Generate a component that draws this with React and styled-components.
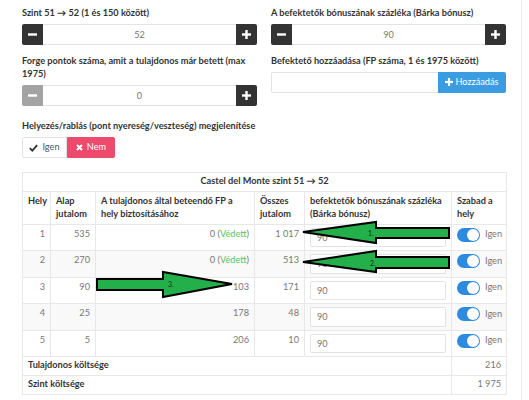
import React from 'react';
import styled, { createGlobalStyle } from 'styled-components';

const Global = createGlobalStyle`
  html, body { margin: 0; padding: 0; background: #fff; }
  body {
    font-family: Lato, "Open Sans", sans-serif;
    font-size: 9.2px;
    line-height: 12.8px;
    color: #333;
  }
  * { box-sizing: border-box; }
`;

const Page = styled.div`
  width: 522px;
  min-height: 400px;
  border-right: 1px solid #ececec;
  padding: 7px 16px 0 22px;
`;

const FormGrid = styled.div`
  display: grid;
  grid-template-columns: 235px 235px;
  column-gap: 14px;
`;

const Column = styled.div`
  display: flex;
  flex-direction: column;
`;

const Group = styled.div`
  margin-bottom: 10px;
  margin-top: ${p => (p.$spaced ? '4px' : '0')};
`;

const Label = styled.div`
  font-weight: 700;
  color: #333;
  white-space: ${p => (p.$nowrap ? 'nowrap' : 'normal')};
  margin-bottom: ${p => (p.$tall ? '5px' : '4px')};
`;

const InputGroup = styled.div`
  display: flex;
  height: 21px;
`;

const StepButton = styled.button`
  width: 21px;
  height: 21px;
  border: none;
  padding: 0;
  display: flex;
  align-items: center;
  justify-content: center;
  background: ${p => (p.$disabled ? '#a3a3a3' : '#333')};
  border-radius: ${p => (p.$side === 'left' ? '2px 0 0 2px' : '0 2px 2px 0')};
`;

const NumberInput = styled.input`
  flex: 1;
  min-width: 0;
  height: 21px;
  border: 1px solid #e3e3e3;
  border-left: none;
  border-right: none;
  text-align: center;
  font: inherit;
  color: #777;
  padding: 0;
  outline: none;
`;

const TextInput = styled.input`
  flex: 1;
  min-width: 0;
  height: 21px;
  border: 1px solid #e3e3e3;
  border-right: none;
  border-radius: 2px 0 0 2px;
  font: inherit;
  padding: 0 6px;
  outline: none;
`;

const AddButton = styled.button`
  width: 68px;
  height: 21px;
  border: none;
  border-radius: 0 2px 2px 0;
  background: #3a9de2;
  color: #fff;
  font: inherit;
  display: flex;
  align-items: center;
  justify-content: center;
  gap: 2px;
  padding: 0;
`;

const ToggleRow = styled.div`
  display: flex;
  height: 21px;
`;

const ToggleButton = styled.button`
  width: ${p => p.$w}px;
  height: 21px;
  font: inherit;
  display: flex;
  align-items: center;
  justify-content: center;
  gap: 4px;
  padding: 0;
  border: 1px solid ${p => (p.$active ? '#ee4a6d' : '#e3e3e3')};
  background: ${p => (p.$active ? '#ee4a6d' : '#fff')};
  color: ${p => (p.$active ? '#fff' : '#555')};
  border-radius: ${p => (p.$side === 'left' ? '2px 0 0 2px' : '0 2px 2px 0')};
`;

const TableWrap = styled.div`
  position: relative;
  margin-top: 4px;
  width: 484px;
`;

const Table = styled.table`
  width: 484px;
  border-collapse: collapse;
  table-layout: fixed;
`;

const Cell = styled.td`
  border: 1px solid #e8e8e8;
  padding: 3px 5px;
  vertical-align: top;
  text-align: ${p => p.$align || 'left'};
  color: #777;
`;

const TitleCell = styled.th`
  border: 1px solid #e8e8e8;
  padding: 2px 5px 3px;
  text-align: center;
  font-weight: 700;
  color: #333;
`;

const HeadCell = styled.th`
  border: 1px solid #e8e8e8;
  padding: 3px 5px;
  text-align: left;
  vertical-align: top;
  font-weight: 700;
  color: #333;
`;

const BodyRow = styled.tr`
  background: ${p => (p.$shade ? '#f9f9f9' : '#fff')};
`;

const FootLabel = styled.td`
  border: 1px solid #e8e8e8;
  padding: 2px 5px 3px;
  font-weight: 700;
  color: #333;
`;

const FootValue = styled.td`
  border: 1px solid #e8e8e8;
  padding: 2px 5px 3px;
  text-align: right;
  color: #777;
`;

const Protected = styled.span`
  color: #5cc15c;
`;

const BonusInput = styled.input`
  display: block;
  width: 100%;
  height: 19.5px;
  border: 1px solid #e3e3e3;
  border-radius: 2px;
  background: #fff;
  font: inherit;
  color: #777;
  padding: 0 6px;
  outline: none;
`;

const SwitchWrap = styled.div`
  display: flex;
  align-items: center;
  gap: 5px;
  height: 14px;
  color: #777;
`;

const Track = styled.span`
  position: relative;
  width: 23px;
  height: 14px;
  border-radius: 7px;
  background: #2d8ae0;
  flex: none;
`;

const Knob = styled.span`
  position: absolute;
  top: 1px;
  right: 1px;
  width: 12px;
  height: 12px;
  border-radius: 50%;
  background: #fff;
`;

const ArrowLayer = styled.svg`
  position: absolute;
  left: 0;
  top: 0;
  pointer-events: none;
  overflow: visible;
`;

const Minus = () => (
  <svg width="9" height="9" viewBox="0 0 9 9">
    <rect x="0" y="3.3" width="9" height="2.4" fill="#fff" />
  </svg>
);

const Plus = ({ size = 9 }) => (
  <svg width={size} height={size} viewBox="0 0 9 9">
    <rect x="0" y="3.3" width="9" height="2.4" fill="#fff" />
    <rect x="3.3" y="0" width="2.4" height="9" fill="#fff" />
  </svg>
);

const Check = () => (
  <svg width="9" height="8" viewBox="0 0 9 8">
    <path d="M0.8 4.2 L3.3 6.6 L8.2 1.2" stroke="#333" strokeWidth="1.8" fill="none" />
  </svg>
);

const Times = () => (
  <svg width="7" height="7" viewBox="0 0 7 7">
    <path d="M1 1 L6 6 M6 1 L1 6" stroke="#fff" strokeWidth="1.9" fill="none" />
  </svg>
);

const Stepper = ({ value, minusDisabled }) => (
  <InputGroup>
    <StepButton $side="left" $disabled={minusDisabled}><Minus /></StepButton>
    <NumberInput readOnly value={value} />
    <StepButton $side="right"><Plus /></StepButton>
  </InputGroup>
);

const Switch = () => (
  <SwitchWrap>
    <Track><Knob /></Track>
    <span>Igen</span>
  </SwitchWrap>
);

const rows = [
  { hely: 1, alap: 535, fp: 0, prot: true, total: '1 017' },
  { hely: 2, alap: 270, fp: 0, prot: true, total: '513' },
  { hely: 3, alap: 90, fp: 103, total: '171' },
  { hely: 4, alap: 25, fp: 178, total: '48' },
  { hely: 5, alap: 5, fp: 206, total: '10' },
];

const leftArrow = (tipX, tipY, baseX, headTop, headBot, bodyTop, bodyBot, tailX) =>
  `${tipX},${tipY} ${baseX},${headTop} ${baseX},${bodyTop} ${tailX},${bodyTop} ${tailX},${bodyBot} ${baseX},${bodyBot} ${baseX},${headBot}`;

const Arrows = () => (
  <ArrowLayer width="484" height="220">
    <g fill="#23b04b" stroke="#000" strokeWidth="2" strokeLinejoin="miter">
      <polygon points={leftArrow(281, 60, 354, 50, 71, 56, 66, 427)} />
      <polygon points={leftArrow(281, 90, 354, 79, 100, 85, 96, 427)} />
      <polygon points={leftArrow(210, 112, 141, 100, 125, 107, 118, 75)} />
    </g>
    <g fontFamily="Lato, sans-serif" fontSize="7" fill="#1c2e1c">
      <text x="346" y="63.5">1.</text>
      <text x="348" y="93.5">2.</text>
      <text x="146" y="114.5">3.</text>
    </g>
  </ArrowLayer>
);

export default function App() {
  return (
    <>
      <Global />
      <Page>
        <FormGrid>
          <Column>
            <Group>
              <Label>Szint 51 → 52 (1 és 150 között)</Label>
              <Stepper value="52" />
            </Group>
            <Group>
              <Label $tall>Forge pontok száma, amit a tulajdonos már betett (max 1975)</Label>
              <Stepper value="0" minusDisabled />
            </Group>
            <Group $spaced>
              <Label $nowrap>Helyezés/rablás (pont nyereség/veszteség) megjelenítése</Label>
              <ToggleRow>
                <ToggleButton $side="left" $w={45}><Check />Igen</ToggleButton>
                <ToggleButton $side="right" $w={48} $active><Times />Nem</ToggleButton>
              </ToggleRow>
            </Group>
          </Column>
          <Column>
            <Group>
              <Label>A befektetők bónuszának százléka (Bárka bónusz)</Label>
              <Stepper value="90" />
            </Group>
            <Group>
              <Label>Befektető hozzáadása (FP száma, 1 és 1975 között)</Label>
              <InputGroup>
                <TextInput />
                <AddButton><Plus size={8} />Hozzáadás</AddButton>
              </InputGroup>
            </Group>
          </Column>
        </FormGrid>

        <TableWrap>
          <Table>
            <colgroup>
              <col style={{ width: 28 }} />
              <col style={{ width: 45 }} />
              <col style={{ width: 159 }} />
              <col style={{ width: 50 }} />
              <col style={{ width: 147 }} />
              <col style={{ width: 55 }} />
            </colgroup>
            <thead>
              <tr><TitleCell colSpan={6}>Castel del Monte szint 51 → 52</TitleCell></tr>
              <tr>
                <HeadCell>Hely</HeadCell>
                <HeadCell>Alap jutalom</HeadCell>
                <HeadCell>A tulajdonos által beteendő FP a hely biztosításához</HeadCell>
                <HeadCell>Összes jutalom</HeadCell>
                <HeadCell>befektetők bónuszának százléka (Bárka bónusz)</HeadCell>
                <HeadCell>Szabad a hely</HeadCell>
              </tr>
            </thead>
            <tbody>
              {rows.map((r, i) => (
                <BodyRow key={r.hely} $shade={i % 2 === 1}>
                  <Cell $align="right">{r.hely}</Cell>
                  <Cell $align="right">{r.alap}</Cell>
                  <Cell $align="right">
                    {r.prot ? <>{r.fp} (<Protected>Védett</Protected>)</> : r.fp}
                  </Cell>
                  <Cell $align="right">{r.total}</Cell>
                  <Cell><BonusInput readOnly value="90" /></Cell>
                  <Cell><Switch /></Cell>
                </BodyRow>
              ))}
              <tr>
                <FootLabel colSpan={5}>Tulajdonos költsége</FootLabel>
                <FootValue>216</FootValue>
              </tr>
              <tr>
                <FootLabel colSpan={5}>Szint költsége</FootLabel>
                <FootValue>1 975</FootValue>
              </tr>
            </tbody>
          </Table>
          <Arrows />
        </TableWrap>
      </Page>
    </>
  );
}
